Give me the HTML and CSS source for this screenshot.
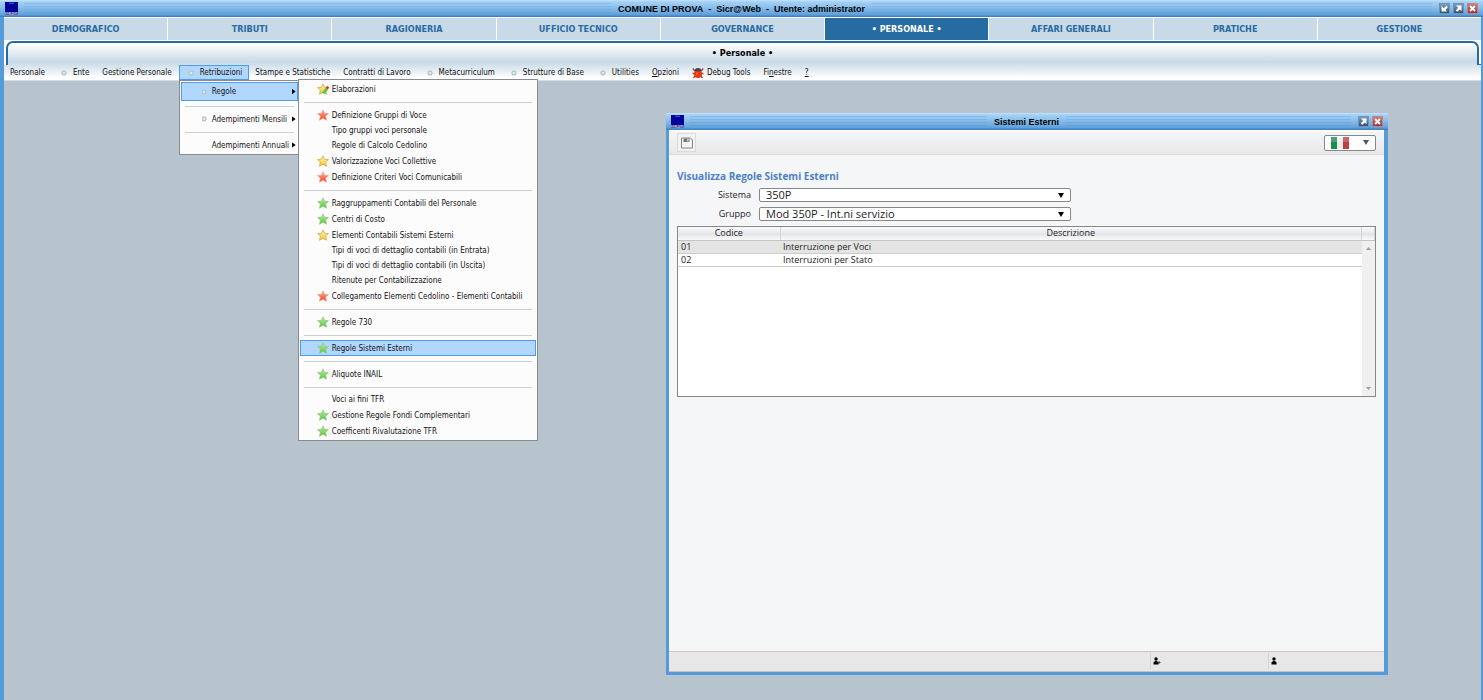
FILE: index.html
```html
<!DOCTYPE html>
<html lang="it">
<head>
<meta charset="utf-8">
<title>COMUNE DI PROVA - Sicr@Web</title>
<link rel="stylesheet" href="styles.css">
</head>
<body>
<svg class="defs" aria-hidden="true">
  <defs>
    <linearGradient id="gy" x1="0" y1="0" x2="0" y2="1"><stop offset="0" stop-color="#fff6c8"/><stop offset="1" stop-color="#fbc62c"/></linearGradient>
    <linearGradient id="gr" x1="0" y1="0" x2="0" y2="1"><stop offset="0" stop-color="#ffb6a4"/><stop offset="1" stop-color="#f4401c"/></linearGradient>
    <linearGradient id="gg" x1="0" y1="0" x2="0" y2="1"><stop offset="0" stop-color="#b9efa6"/><stop offset="1" stop-color="#58c63c"/></linearGradient>
    <path id="star" d="M6 .8 7.5 4.3 11.4 4.6 8.6 7.2 9.5 11.2 6 9.2 2.5 11.2 3.4 7.2 .6 4.6 4.5 4.3Z" stroke-width=".7" stroke-linejoin="round"/>
    <symbol id="star-y" viewBox="0 0 12 12"><use href="#star" fill="url(#gy)" stroke="#d3a029"/></symbol>
    <symbol id="star-r" viewBox="0 0 12 12"><use href="#star" fill="url(#gr)" stroke="#e8a090"/></symbol>
    <symbol id="star-g" viewBox="0 0 12 12"><use href="#star" fill="url(#gg)" stroke="#8fc480"/></symbol>
    <symbol id="star-e" viewBox="0 0 12 12"><use href="#star" fill="url(#gy)" stroke="#d3a029"/><path d="M6 10.400 10 5.500" stroke="#5cc84a" stroke-width="3"/><path d="M9.700 5.600 11.200 3.600" stroke="#e0332a" stroke-width="2.600"/></symbol>
    <symbol id="logo" viewBox="0 0 13 13"><path fill="#00009a" d="M0 0H13V10.5H0Z"/><path d="M4 1.2H9" stroke="#7d7dd6" stroke-width=".8"/><path fill="#3e3a86" d="M0 10H13V12.5H0Z"/><path d="M.6 12V10.4L1.8 11.5 3 10.4V12M4 10.6H5.6V12H4ZM6.6 10.6H8.2V12.4H6.6M9.2 10.3V12M10.4 12V10.6H12V12" fill="none" stroke="#e4d9ee" stroke-width=".6"/></symbol>
    <symbol id="max" viewBox="0 0 7 7"><path d="M1 .5H6.500V6L4.800 4.600 2.200 6.800.8 5.400 3.200 2.700Z" fill="#fff"/></symbol>
    <symbol id="min" viewBox="0 0 7 7"><path d="M.5 1V6.500H6L4.600 4.800 6.800 2.200 5.400.8 2.700 3.200Z" fill="#fff"/></symbol>
    <symbol id="close" viewBox="0 0 7 7"><path d="M1 1 6 6M6 1 1 6" fill="none" stroke="#fff" stroke-width="1.9"/></symbol>
  </defs>
</svg>
<div class="app">
  <header class="titlebar">
    <svg class="logo"><use href="#logo"/></svg>
    <span class="stripes"></span>
    <h1 class="title">COMUNE DI PROVA&nbsp; -&nbsp; Sicr@Web&nbsp; -&nbsp; Utente: administrator</h1>
    <span class="stripes"></span>
    <span class="controls">
      <button class="ctl" aria-label="Riduci"><svg><use href="#min"/></svg></button>
      <button class="ctl" aria-label="Ingrandisci"><svg><use href="#max"/></svg></button>
      <button class="ctl ctl-close" aria-label="Chiudi"><svg><use href="#close"/></svg></button>
    </span>
  </header>
  <nav class="tabs">
    <a href="#" class="tab">DEMOGRAFICO</a>
    <a href="#" class="tab">TRIBUTI</a>
    <a href="#" class="tab">RAGIONERIA</a>
    <a href="#" class="tab">UFFICIO TECNICO</a>
    <a href="#" class="tab">GOVERNANCE</a>
    <a href="#" class="tab tab-on">• PERSONALE •</a>
    <a href="#" class="tab">AFFARI GENERALI</a>
    <a href="#" class="tab">PRATICHE</a>
    <a href="#" class="tab">GESTIONE</a>
  </nav>
  <div class="ribbon">
    <div class="subtabs"><span class="cap"></span><a href="#" class="subtab">• Personale •</a><span class="cap"></span></div>
    <nav class="menubar">
      <button class="mi">Personale</button>
      <button class="mi mi-dot">Ente</button>
      <button class="mi">Gestione Personale</button>
      <div class="holder">
        <button class="mi mi-dot mi-on">Retribuzioni</button>
        <div class="menu menu-main">
          <button class="row row-on"><i class="dot"></i><span>Regole</span><i class="arrow"></i></button>
          <hr class="sep">
          <button class="row"><i class="dot"></i><span>Adempimenti Mensili</span><i class="arrow"></i></button>
          <hr class="sep">
          <button class="row"><i></i><span>Adempimenti Annuali</span><i class="arrow"></i></button>
          <div class="menu menu-sub">
            <button class="item"><svg><use href="#star-e"/></svg>Elaborazioni</button>
            <hr class="sep">
            <button class="item"><svg><use href="#star-r"/></svg>Definizione Gruppi di Voce</button>
            <button class="item plain">Tipo gruppi voci personale</button>
            <button class="item plain">Regole di Calcolo Cedolino</button>
            <button class="item"><svg><use href="#star-y"/></svg>Valorizzazione Voci Collettive</button>
            <button class="item"><svg><use href="#star-r"/></svg>Definizione Criteri Voci Comunicabili</button>
            <hr class="sep">
            <button class="item"><svg><use href="#star-g"/></svg>Raggruppamenti Contabili del Personale</button>
            <button class="item"><svg><use href="#star-g"/></svg>Centri di Costo</button>
            <button class="item"><svg><use href="#star-y"/></svg>Elementi Contabili Sistemi Esterni</button>
            <button class="item plain">Tipi di voci di dettaglio contabili (in Entrata)</button>
            <button class="item plain">Tipi di voci di dettaglio contabili (in Uscita)</button>
            <button class="item plain">Ritenute per Contabilizzazione</button>
            <button class="item"><svg><use href="#star-r"/></svg>Collegamento Elementi Cedolino - Elementi Contabili</button>
            <hr class="sep">
            <button class="item"><svg><use href="#star-g"/></svg>Regole 730</button>
            <hr class="sep">
            <button class="item item-on"><svg><use href="#star-g"/></svg>Regole Sistemi Esterni</button>
            <hr class="sep">
            <button class="item"><svg><use href="#star-g"/></svg>Aliquote INAIL</button>
            <hr class="sep">
            <button class="item plain">Voci ai fini TFR</button>
            <button class="item"><svg><use href="#star-g"/></svg>Gestione Regole Fondi Complementari</button>
            <button class="item"><svg><use href="#star-g"/></svg>Coefficenti Rivalutazione TFR</button>
          </div>
        </div>
      </div>
      <button class="mi">Stampe e Statistiche</button>
      <button class="mi">Contratti di Lavoro</button>
      <button class="mi mi-dot">Metacurriculum</button>
      <button class="mi mi-dot">Strutture di Base</button>
      <button class="mi mi-dot">Utilities</button>
      <button class="mi"><u>O</u>pzioni</button>
      <button class="mi mi-bug"><svg viewBox="0 0 12 12"><path d="M.8 1.500 2.800 4M11.200 1.500 9.200 4M.5 6.500H3M11.500 6.500H9M1.500 11 3 9M10.500 11 9 9" stroke="#a8452c" stroke-width="1.300" fill="none"/><ellipse cx="6" cy="7" rx="4" ry="4" fill="#ee3512"/><path d="M2.500 4.200C2.500 2 4 1 6 1S9.500 2 9.500 4.200Z" fill="#4a4448"/><circle cx="5" cy="6.500" r="1" fill="#ff8a5c"/></svg>Debug Tools</button>
      <button class="mi">Fi<u>n</u>estre</button>
      <button class="mi"><u>?</u></button>
    </nav>
  </div>
  <main class="desktop">
    <section class="window">
      <header class="titlebar">
        <svg class="logo"><use href="#logo"/></svg>
        <span class="stripes"></span>
        <h2 class="title">Sistemi Esterni</h2>
        <span class="stripes"></span>
        <span class="controls">
          <button class="ctl" aria-label="Ingrandisci"><svg><use href="#max"/></svg></button>
          <button class="ctl ctl-close" aria-label="Chiudi"><svg><use href="#close"/></svg></button>
        </span>
      </header>
      <div class="toolbar">
        <button class="save" aria-label="Salva"><svg viewBox="0 0 12 12"><path d="M.5 1H9.500L11.500 3V11H.5Z" fill="#f4f4f4" stroke="#858585"/><path d="M2.500 1.500H8.500V5H2.500Z" fill="#777"/><path d="M6.300 2H7.500V4.500H6.300Z" fill="#eee"/></svg></button>
        <button class="lang" aria-label="Lingua: italiano"><svg viewBox="0 0 18 12"><path d="M0 0H6V12H0Z" fill="#1d8a4e"/><path d="M6 0H12V12H6Z" fill="#ededed"/><path d="M12 0H18V12H12Z" fill="#bf3f49"/><path d="M0 0H18V5H0Z" fill="#fff" opacity=".2"/></svg><i class="tri"></i></button>
      </div>
      <div class="content">
        <h3 class="heading">Visualizza Regole Sistemi Esterni</h3>
        <form class="form">
          <label for="sistema">Sistema</label>
          <span class="pick"><select id="sistema"><option>350P</option></select></span>
          <label for="gruppo">Gruppo</label>
          <span class="pick"><select id="gruppo"><option>Mod 350P - Int.ni servizio</option></select></span>
        </form>
        <div class="grid">
          <table class="table">
            <thead><tr><th class="c1">Codice</th><th>Descrizione</th><th class="c3"></th></tr></thead>
            <tbody>
              <tr class="sel"><td>01</td><td>Interruzione per Voci</td><td class="track"></td></tr>
              <tr><td>02</td><td>Interruzioni per Stato</td><td class="track"></td></tr>
            </tbody>
          </table>
          <div class="scroll"><i class="up"></i><i class="down"></i></div>
        </div>
      </div>
      <footer class="status">
        <span class="cell"></span>
        <span class="cell"><svg viewBox="0 0 8 8"><circle cx="3" cy="2" r="1.700"/><path d="M.5 7.500V5.500L2 4H4L5.500 5.500V7.500Z"/><path d="M4.500 5.500H7.500M6 4V7" stroke="#444"/></svg></span>
        <span class="cell"><svg viewBox="0 0 8 8"><circle cx="3" cy="2" r="1.700"/><path d="M.5 7.500V5.500L2 4H4L5.500 5.500V7.500Z"/></svg></span>
      </footer>
    </section>
  </main>
</div>
</body>
</html>
```
FILE: styles.css
```css
* { box-sizing: border-box; }
html, body { height: 100%; }
body { margin: 0; overflow: hidden; background: #b7c3cd; color: #111; }
button { margin: 0; padding: 0; border: 0; background: none; color: inherit; font: inherit; text-align: left; }
h1, h2, h3 { margin: 0; }
svg, i { display: block; flex: none; }
.defs { position: absolute; width: 0; height: 0; }

.app {
  display: flex; flex-direction: column; min-height: 100vh;
  border: solid #559bd9; border-width: 0 2px 0 4px;
}

/* Title bars */
.titlebar {
  display: flex; align-items: center; gap: 6px; height: 17px; margin: 0 -2px 0 -4px; padding: 0 5px;
  background: linear-gradient(#c3e2fb 0, #a3d0f6 2px, #92c4ee 6px, #76b0e4 11px, #5b9fdb 15px, #4482bc 16px);
}
.logo { width: 13px; height: 13px; }
.stripes { flex: 1 1 0; align-self: stretch; margin: 3px 0 2px; background: repeating-linear-gradient(#4f8fca40 0 1px, transparent 1px 3px); }
.logo + .stripes { flex-basis: 27px; }
.window .logo + .stripes { flex-basis: 12px; }
.title { padding: 1px 1px 0; font: bold 9px/16px "Liberation Sans", Arial, sans-serif; color: #000; white-space: pre; }
.controls { display: flex; gap: 3px; padding-left: 1px; }
.ctl { display: flex; align-items: center; justify-content: center; width: 11px; height: 11px; border: 1px solid #6c94b8; background: linear-gradient(#7d9fbd, #36536e); }
.ctl svg { width: 7px; height: 7px; }
.ctl-close { background: linear-gradient(#d9776e, #96343a); border-color: #b08a98; }

/* Area tabs */
.tabs { display: grid; grid-template-columns: repeat(9, 1fr); gap: 1px; height: 24px; padding: 1px 0; background: #fff; }
.tab { display: flex; align-items: center; justify-content: center; background: #c8d9e7; color: #276ba3; font: bold 9px/12px "DejaVu Sans Condensed", Tahoma, sans-serif; text-decoration: none; }
.tab-on { background: #276ba3; color: #fff; }

/* Ribbon and menu bar */
.ribbon { background: linear-gradient(#fff 2px, #c8d9e7 21px, #fff 37px); border-bottom: 1px solid #d5dce2; }
.subtabs { display: flex; height: 24px; overflow: hidden; }
.cap { width: 2px; background: #fff; border-bottom: 1px solid #276ba3; }
.subtab { flex: 1; border: solid #276ba3; border-width: 2px 2px 0; border-radius: 7px 7px 0 0; box-shadow: 0 0 0 4px #fff; color: #000; font: bold 9px/20px "DejaVu Sans Condensed", Tahoma, sans-serif; text-align: center; text-decoration: none; }
.menubar { display: flex; height: 15px; font: 8px/13px "DejaVu Sans Condensed", Tahoma, sans-serif; }
.mi { height: 15px; padding: 0 6px 0 5px; border: 1px solid transparent; white-space: nowrap; }
.mi-dot { padding-left: 20px; background: radial-gradient(circle at 11px 7px, #dfe8e6 1px, #a9b9b7 2px, transparent 3px); }
.mi-on { border-color: #4f9be8; background-color: #b1d7ff; }
.mi-bug { display: flex; align-items: center; gap: 3px; }
.mi-bug svg { width: 12px; height: 12px; }

/* Drop-down menus */
.holder { position: relative; }
.menu { position: absolute; z-index: 5; border: 1px solid #888c90; background: #fcfcfc; }
.menu button { display: flex; align-items: center; width: 100%; white-space: nowrap; }
.menu-main { top: 15px; left: 0; width: 120px; padding: 1px 0 1px 1px; }
.menu-sub { top: -2px; left: 118px; width: 240px; padding: 1px; }
.sep { height: 1px; margin: 5px 4px 4px; border: 0; background: #cfcfcf; }
.menu .row { height: 16px; padding-left: 20px; border: 1px solid transparent; }
.row i { width: 10px; height: 10px; }
.row span { flex: 1; }
.row .dot { background: radial-gradient(circle at 2px 5px, #dfe8e6 1px, #a9b9b7 2px, transparent 3px); }
.row .arrow { width: 4px; height: 6px; margin-right: 1px; background: #000; clip-path: polygon(0 0, 100% 50%, 0 100%); }
.menu .row-on, .menu .item-on { border: 1px solid #4f9be8; background: #b1d7ff; }
.menu .row-on { height: 19px; }
.menu .item { gap: 3px; height: 16px; padding-left: 16px; border: 1px solid transparent; }
.menu .item-on { border-color: #4f9be8; }
.menu .plain { height: 15px; padding-left: 31px; }
.item svg { width: 12px; height: 12px; }

/* Desktop and window */
.desktop { position: relative; flex: 1; background: #b7c3cd; }
.window {
  position: absolute; top: 32px; left: 662px; right: 93px; height: 562px; display: flex; flex-direction: column;
  border: solid #559bd9; border-width: 0 4px 3px 3px; font: 9px/12px "Open Sans", "Noto Sans", sans-serif; color: #222;
}
.window .titlebar { margin: 0 -4px 0 -3px; }
.toolbar { display: flex; align-items: center; justify-content: space-between; height: 25px; padding: 0 8px; border-top: 1px solid #fff; border-bottom: 1px solid #dcdcdc; background: linear-gradient(#f5f6f8, #e8e8e8); }
.save { display: flex; align-items: center; justify-content: center; width: 19px; height: 19px; border: 1px solid #dadada; background: #f3f3f3; }
.save svg { width: 12px; height: 12px; }
.lang { display: flex; align-items: center; justify-content: space-between; width: 52px; height: 16px; padding: 0 6px; border: 1px solid #888; border-radius: 2px; background: #fff; }
.lang svg { width: 18px; height: 12px; }
.tri { width: 6px; height: 5px; background: #555; clip-path: polygon(0 0, 100% 0, 50% 100%); }
.content { flex: 1; padding: 13px 8px 0; background: #f5f6f8; }
.heading { font-size: 10px; line-height: 16px; color: #4f81c7; }
.form { display: grid; grid-template-columns: 74px 312px; column-gap: 8px; row-gap: 5px; margin: 4px 0 5px; align-items: center; }
.form label { text-align: right; }
.pick { position: relative; display: block; }
.pick::after { content: ""; position: absolute; top: 5px; right: 7px; width: 6px; height: 5px; background: #000; clip-path: polygon(0 0, 100% 0, 50% 100%); }
.pick select { display: block; appearance: none; width: 100%; height: 14px; padding: 0 6px; border: 1px solid #85878a; border-radius: 2px; background: #fff; color: #222; font: 11px/12px "Open Sans", "Noto Sans", sans-serif; }
.grid { position: relative; height: 171px; border: 1px solid #85878a; background: #fff; }
.table { width: 100%; border-collapse: collapse; table-layout: fixed; line-height: 12px; }
.table th { height: 13px; padding: 0; border-right: 1px solid #d4d5d8; border-bottom: 1px solid #c4c4c4; background: linear-gradient(#fafafa, #e4e5ec 55%, #fafafa); font-weight: normal; }
.c1 { width: 102px; }
.c3 { width: 13px; }
.table td { height: 13px; padding: 0 3px; border-bottom: 1px solid #ccc; }
.table .track { border: 0; background: #f0f0f0; }
.sel td { background: #e4e4e4; }
.scroll { position: absolute; top: 14px; right: 0; bottom: 0; width: 13px; display: flex; flex-direction: column; justify-content: space-between; align-items: center; padding: 6px 0; background: #f0f0f0; }
.scroll i { width: 6px; height: 3px; background: #a5a5a5; }
.up { clip-path: polygon(50% 0, 100% 100%, 0 100%); }
.down { clip-path: polygon(0 0, 100% 0, 50% 100%); }
.status { display: grid; grid-template-columns: 1fr 118px 116px; height: 21px; padding: 1px 0 2px; border-top: 1px solid #cbc5c5; border-bottom: 1px solid #b9c4cd; background: #e8e6e6; }
.cell + .cell { display: flex; align-items: center; padding-left: 2px; border-left: 1px solid #d2d2d2; }
.cell svg { width: 8px; height: 8px; }
```
